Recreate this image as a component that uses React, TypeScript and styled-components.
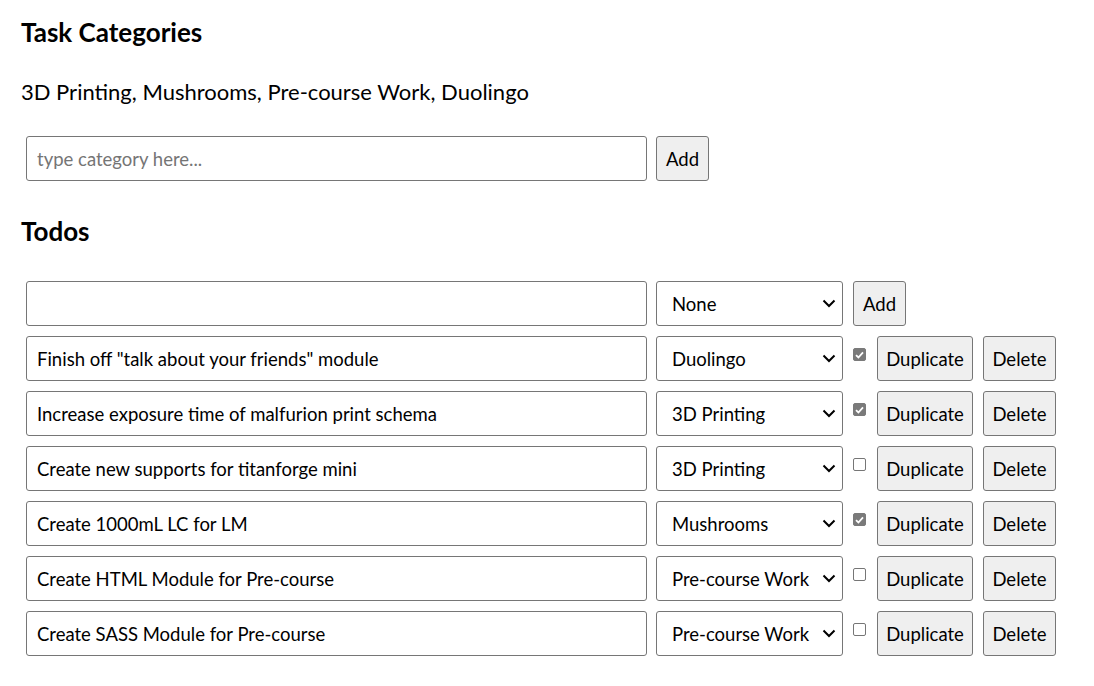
import React, { useState } from "react";
import styled, { createGlobalStyle } from "styled-components";

const GlobalStyle = createGlobalStyle`
  html, body { margin: 0; padding: 0; background: #ffffff; }
  body { font-family: Lato, "Open Sans", sans-serif; color: #000; }
`;

const Page = styled.div`
  display: flex;
  flex-direction: column;
  padding: 17px 0 0 21px;
  width: 1094px;
  box-sizing: border-box;
`;

const Heading = styled.h2<{ $top: number }>`
  margin: ${(p) => p.$top}px 0 0 0;
  font-size: 26px;
  line-height: 30px;
  font-weight: 700;
`;

const CategoryList = styled.p`
  margin: 32px 0 0 0;
  font-size: 22px;
  line-height: 26px;
`;

const FormRow = styled.div<{ $top: number }>`
  display: flex;
  align-items: flex-start;
  margin: ${(p) => p.$top}px 0 0 5px;
`;

const TodoList = styled.div`
  display: flex;
  flex-direction: column;
  gap: 10px;
  margin-top: 35px;
`;

const TextInput = styled.input`
  box-sizing: border-box;
  width: 621px;
  height: 45px;
  border: 1px solid #767676;
  border-radius: 3px;
  padding: 0 10px;
  font-family: inherit;
  font-size: 18.5px;
  color: #000;
  background: #fff;
  outline: none;
  &::placeholder { color: #757575; }
`;

const SelectWrap = styled.div`
  position: relative;
  margin-left: 9px;
  width: 187px;
  height: 45px;
`;

const Select = styled.select`
  appearance: none;
  box-sizing: border-box;
  width: 100%;
  height: 100%;
  border: 1px solid #767676;
  border-radius: 3px;
  padding: 0 0 0 15px;
  font-family: inherit;
  font-size: 18.5px;
  color: #000;
  background: #fff;
  outline: none;
`;

const Chevron = styled.svg`
  position: absolute;
  right: 7px;
  top: 18px;
  width: 14px;
  height: 9px;
  pointer-events: none;
`;

const Button = styled.button<{ $w: number; $gap: number }>`
  box-sizing: border-box;
  width: ${(p) => p.$w}px;
  height: 45px;
  margin-left: ${(p) => p.$gap}px;
  border: 1px solid #767676;
  border-radius: 3px;
  background: #efefef;
  font-family: inherit;
  font-size: 18.5px;
  color: #000;
  padding: 0;
`;

const Check = styled.span<{ $on: boolean }>`
  box-sizing: border-box;
  width: 13px;
  height: 13px;
  margin: 12px 0 0 10px;
  border-radius: 2px;
  border: 1px solid ${(p) => (p.$on ? "#7a7a7a" : "#767676")};
  background: ${(p) => (p.$on ? "#7a7a7a" : "#fff")};
  display: flex;
  align-items: center;
  justify-content: center;
`;

const categories = ["3D Printing", "Mushrooms", "Pre-course Work", "Duolingo"];

const todos = [
  { text: 'Finish off "talk about your friends" module', cat: "Duolingo", done: true },
  { text: "Increase exposure time of malfurion print schema", cat: "3D Printing", done: true },
  { text: "Create new supports for titanforge mini", cat: "3D Printing", done: false },
  { text: "Create 1000mL LC for LM", cat: "Mushrooms", done: true },
  { text: "Create HTML Module for Pre-course", cat: "Pre-course Work", done: false },
  { text: "Create SASS Module for Pre-course", cat: "Pre-course Work", done: false },
];

function CategorySelect({ value }: { value: string }) {
  return (
    <SelectWrap>
      <Select defaultValue={value}>
        <option>None</option>
        {categories.map((c) => (
          <option key={c}>{c}</option>
        ))}
      </Select>
      <Chevron viewBox="0 0 14 9">
        <path d="M1.5 1.5 L7 7 L12.5 1.5" fill="none" stroke="#000" strokeWidth="2" />
      </Chevron>
    </SelectWrap>
  );
}

export default function App() {
  const [items] = useState(todos);
  return (
    <>
      <GlobalStyle />
      <Page>
        <Heading $top={0}>Task Categories</Heading>
        <CategoryList>{categories.join(", ")}</CategoryList>
        <FormRow $top={31}>
          <TextInput placeholder="type category here..." />
          <Button $w={53} $gap={9}>Add</Button>
        </FormRow>
        <Heading $top={35}>Todos</Heading>
        <TodoList>
          <FormRow $top={0}>
            <TextInput />
            <CategorySelect value="None" />
            <Button $w={53} $gap={10}>Add</Button>
          </FormRow>
          {items.map((t) => (
            <FormRow $top={0} key={t.text}>
              <TextInput defaultValue={t.text} />
              <CategorySelect value={t.cat} />
              <Check $on={t.done}>
                {t.done && (
                  <svg width="9" height="8" viewBox="0 0 9 8">
                    <path d="M1 4.2 L3.4 6.5 L8 1.3" fill="none" stroke="#fff" strokeWidth="1.8" />
                  </svg>
                )}
              </Check>
              <Button $w={96} $gap={11}>Duplicate</Button>
              <Button $w={73} $gap={10}>Delete</Button>
            </FormRow>
          ))}
        </TodoList>
      </Page>
    </>
  );
}
